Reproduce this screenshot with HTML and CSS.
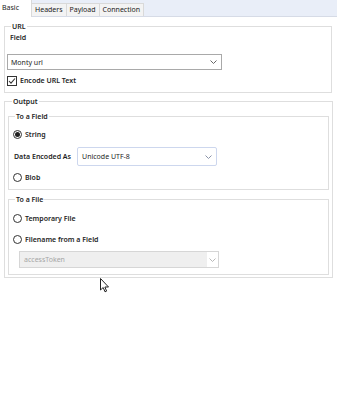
FILE: index.html
```html
<!DOCTYPE html>
<html lang="en">
<head>
    <meta charset="UTF-8">
    <title>Download Tool</title>
    <link rel="stylesheet" href="styles.css">
</head>
<body>
    <!-- BEGIN::tabs -->
    <div class="tabs">
        <div class="tab active">Basic</div>
        <div class="tab">Headers</div>
        <div class="tab">Payload</div>
        <div class="tab">Connection</div>
    </div>
    <!-- END::tabs -->
    <!-- BEGIN::panel -->
    <div class="panel">
        <fieldset class="group url-group">
            <legend>URL</legend>
            <div class="label field-label">Field</div>
            <div class="select url-select">
                <span>Monty url</span>
                <svg class="chev" width="7" height="4" viewBox="0 0 7 4"><path d="M0.5 0.5 L3.5 3.5 L6.5 0.5" fill="none" stroke="#666" stroke-width="1"/></svg>
            </div>
            <div class="row check-row">
                <span class="checkbox">
                    <svg width="8" height="8" viewBox="0 0 8 8"><path d="M1 4 L3 6.2 L7 1.5" fill="none" stroke="#333" stroke-width="1.1"/></svg>
                </span>
                <span class="label">Encode URL Text</span>
            </div>
        </fieldset>

        <fieldset class="group output-group">
            <legend>Output</legend>
            <fieldset class="group inner field-group">
                <legend>To a Field</legend>
                <div class="row radio-row first">
                    <span class="radio checked"></span>
                    <span class="label">String</span>
                </div>
                <div class="row encode-row">
                    <span class="label">Data Encoded As</span>
                    <div class="select enc-select">
                        <span>Unicode UTF-8</span>
                        <svg class="chev" width="7" height="4" viewBox="0 0 7 4"><path d="M0.5 0.5 L3.5 3.5 L6.5 0.5" fill="none" stroke="#8a93a8" stroke-width="1"/></svg>
                    </div>
                </div>
                <div class="row radio-row blob-row">
                    <span class="radio"></span>
                    <span class="label">Blob</span>
                </div>
            </fieldset>
            <fieldset class="group inner file-group">
                <legend>To a File</legend>
                <div class="row radio-row first">
                    <span class="radio"></span>
                    <span class="label">Temporary File</span>
                </div>
                <div class="row radio-row second">
                    <span class="radio"></span>
                    <span class="label">Filename from a Field</span>
                </div>
                <div class="select disabled">
                    <span>accessToken</span>
                    <span class="arrow-box">
                        <svg class="chev" width="7" height="4" viewBox="0 0 7 4"><path d="M0.5 0.5 L3.5 3.5 L6.5 0.5" fill="none" stroke="#b8b8b8" stroke-width="1"/></svg>
                    </span>
                </div>
            </fieldset>
        </fieldset>
    </div>
    <!-- END::panel -->

    <svg class="cursor" width="10" height="16" viewBox="0 0 10 16">
        <path d="M0.5 0.5 L0.5 12 L3.2 9.5 L5 13.8 L6.6 13.1 L4.9 9 L8.5 9 Z" fill="#fff" stroke="#222" stroke-width="1" stroke-linejoin="round"/>
    </svg>
</body>
</html>
```

FILE: styles.css
```css
*{
    margin: 0;
    padding: 0;
    box-sizing: border-box;
}

body{
    background: #fff;
    font-family: 'Noto Sans', 'Open Sans', sans-serif;
    font-size: 7px;
    line-height: 11px;
    color: #1e1e1e;
    width: 337px;
    height: 400px;
    position: relative;
}

/* tabs */
.tabs{
    display: flex;
    align-items: flex-end;
    height: 17px;
    background: #e9eef8;
    border-bottom: 1px solid #d6dbe6;
}

.tab{
    height: 13px;
    padding: 0 3px;
    background: #f3f3f3;
    border: 1px solid #d9d9d9;
    border-bottom: none;
    margin-left: -1px;
    line-height: 12px;
    color: #222;
}

.tab.active{
    height: 17px;
    margin: 0 0 -1px 0;
    width: 32px;
    padding: 2px 2px 0;
    background: #fff;
    border: none;
    border-right: 1px solid #d9d9d9;
}

/* panel */
.panel{
    padding: 4px 5px 0 4px;
}

.group{
    border: 1px solid #dedede;
    min-width: 0;
}

.group legend{
    margin-left: 4px;
    padding: 0 1px;
    line-height: 11px;
    font-weight: 600;
}

.url-group{
    padding: 0 2px 6px 2px;
    width: 328px;
}

.label{
    font-weight: 600;
    color: #1e1e1e;
}

.field-label{
    padding-left: 3px;
}

.select{
    display: flex;
    align-items: center;
    justify-content: space-between;
    border: 1px solid #a9a9a9;
    background: #fff;
    padding: 0 4px 0 3px;
    color: #1e1e1e;
}

.url-select{
    width: 215px;
    height: 16px;
    margin-top: 11px;
}

.row{
    display: flex;
    align-items: center;
}

.check-row{
    margin-top: 5px;
    height: 11px;
}

.checkbox{
    width: 10px;
    height: 10px;
    border: 1px solid #333;
    margin-right: 3px;
    display: flex;
    align-items: center;
    justify-content: center;
}

.output-group{
    margin-top: 3px;
    width: 329px;
    padding: 0 3px 2px 3px;
}

.inner{
    margin-top: 4px;
    padding: 0 3px 6px 3px;
}

.inner legend{
    margin-left: 3px;
}

.radio-row{
    height: 12px;
}

.radio{
    width: 9px;
    height: 9px;
    border: 1px solid #333;
    border-radius: 50%;
    margin: 0 3px 0 1px;
    display: flex;
    align-items: center;
    justify-content: center;
}

.radio.checked::after{
    content: "";
    width: 5px;
    height: 5px;
    border-radius: 50%;
    background: #222;
}

.field-group .first{
    margin-top: 6px;
}

.encode-row{
    margin-top: 7px;
    height: 19px;
    padding-left: 2px;
}

.enc-select{
    width: 140px;
    height: 19px;
    margin-left: 6px;
    border: 1px solid #cdd7ee;
    border-radius: 2px;
    padding-left: 4px;
}

.blob-row{
    margin-top: 5px;
}

.file-group .first{
    margin-top: 7px;
}

.file-group .second{
    margin-top: 9px;
}

.disabled{
    width: 200px;
    height: 17px;
    margin: 6px 0 0 7px;
    background: #efefef;
    border: 1px solid #d6d6d6;
    color: #a6a6a6;
    padding: 0 0 0 4px;
}

.arrow-box{
    width: 11px;
    height: 15px;
    background: #fff;
    display: flex;
    align-items: center;
    justify-content: center;
}

/* pointer on top of the page */
.cursor{
    position: absolute;
    left: 100px;
    top: 278px;
}
```
